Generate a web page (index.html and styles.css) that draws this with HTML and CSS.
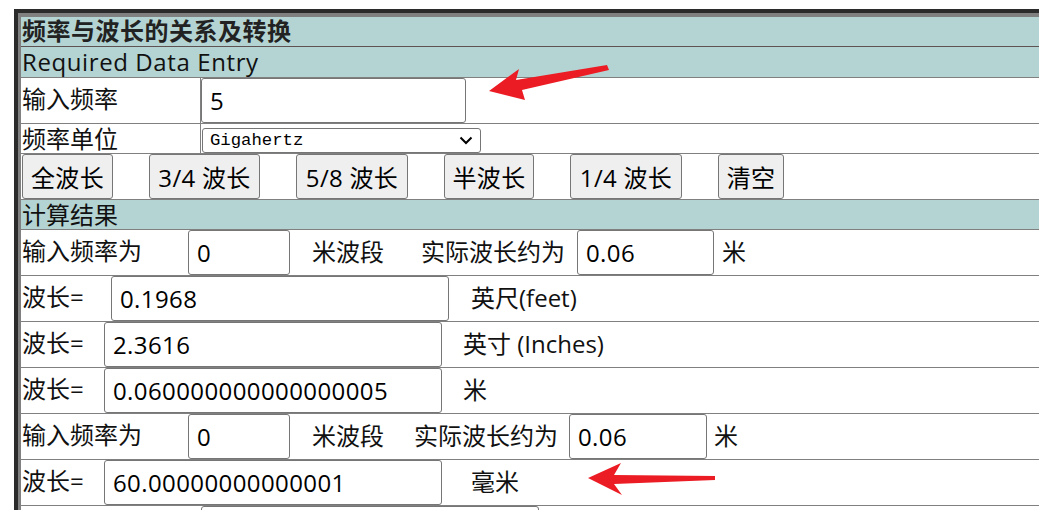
FILE: index.html
```html
<!DOCTYPE html>
<html lang="zh-CN">
<head>
<meta charset="utf-8">
<title>频率与波长的关系及转换</title>
<link rel="stylesheet" href="styles.css">
</head>
<body>
<div class="page">
  <div class="frame">
    <div class="inner">
      <div class="hdr title">频率与波长的关系及转换</div>
      <div class="hdr sub">Required Data Entry</div>

      <div class="row">
        <div class="lbl lbl-a">输入频率</div>
        <input class="inp w-freq" type="text" value="5">
      </div>

      <div class="row short bottom">
        <div class="lbl lbl-a">频率单位</div>
        <div class="select">
          <span>Gigahertz</span>
          <svg class="chev" width="14" height="9" viewBox="0 0 14 9"><polyline points="1.5,1.5 7,7 12.5,1.5" fill="none" stroke="#000" stroke-width="2"/></svg>
        </div>
      </div>

      <div class="row btns">
        <button class="btn bw91">全波长</button>
        <button class="btn bw111">3/4 波长</button>
        <button class="btn bw112">5/8 波长</button>
        <button class="btn bw90">半波长</button>
        <button class="btn bw112">1/4 波长</button>
        <button class="btn bw66">清空</button>
      </div>

      <div class="hdr sec">计算结果</div>

      <div class="row">
        <div class="lbl lbl-b">输入频率为</div>
        <input class="inp w-small" type="text" value="0">
        <span class="txt m22">米波段</span>
        <span class="txt m37">实际波长约为</span>
        <input class="inp w-approx m12" type="text" value="0.06">
        <span class="txt m8">米</span>
      </div>

      <div class="row">
        <div class="lbl lbl-c">波长=</div>
        <input class="inp w-long" type="text" value="0.1968">
        <span class="txt m22">英尺(feet)</span>
      </div>

      <div class="row">
        <div class="lbl lbl-d">波长=</div>
        <input class="inp w-long" type="text" value="2.3616">
        <span class="txt m21">英寸 (Inches)</span>
      </div>

      <div class="row">
        <div class="lbl lbl-d">波长=</div>
        <input class="inp w-long" type="text" value="0.060000000000000005">
        <span class="txt m21">米</span>
      </div>

      <div class="row">
        <div class="lbl lbl-b">输入频率为</div>
        <input class="inp w-small" type="text" value="0">
        <span class="txt m22">米波段</span>
        <span class="txt m30">实际波长约为</span>
        <input class="inp w-approx2 m11" type="text" value="0.06">
        <span class="txt m7">米</span>
      </div>

      <div class="row">
        <div class="lbl lbl-d">波长=</div>
        <input class="inp w-long" type="text" value="60.00000000000001">
        <span class="txt m29">毫米</span>
      </div>

      <div class="row">
        <div class="lbl lbl-e"></div>
        <input class="inp w-long" type="text" value="">
      </div>
    </div>
  </div>
</div>

<svg class="arrows" width="1039" height="510" viewBox="0 0 1039 510">
  <path d="M489 91 L519 69 L516 80 L607 65 L609 70 L522 90 L525 100 Z" fill="#ec1c24"/>
  <path d="M588 478 L621 463 L614 475 L715 476 L715 480 L614 484 L622 495 Z" fill="#ec1c24"/>
</svg>
</body>
</html>
```

FILE: styles.css
```css
html, body {
  margin: 0;
  padding: 0;
  overflow: hidden;
  background: #fff;
}

body {
  width: 1039px;
  height: 510px;
  position: relative;
  font-family: "Open Sans", "Noto Sans CJK SC", sans-serif;
  font-size: 24px;
  color: #111;
}

.page {
  box-sizing: border-box;
  height: 510px;
  overflow: hidden;
  padding: 9px 0 0 14px;
}

.frame {
  width: 1025px;
  border-top: 4px solid #2b2b2b;
  border-left: 4px solid #2b2b2b;
}

.inner {
  border-top: 4px solid #808080;
  border-left: 3px solid #808080;
}

.hdr {
  background: #b4d4d3;
  height: 29px;
  line-height: 29px;
  padding-left: 1px;
  border-bottom: 1px solid #808080;
  white-space: nowrap;
}

.title {
  font-weight: 700;
  color: #222;
  letter-spacing: 0.5px;
  line-height: 28px;
  border-bottom-color: #5e5252;
}

.sub {
  height: 30px;
  line-height: 30px;
  letter-spacing: 0.6px;
}

.row {
  display: flex;
  align-items: center;
  height: 45px;
  border-bottom: 1px solid #808080;
  white-space: nowrap;
}

.row.short {
  height: 29px;
}

.row.bottom {
  align-items: flex-end;
}

.lbl {
  box-sizing: border-box;
  flex: none;
  padding-left: 1px;
  padding-bottom: 5px;
  line-height: 29px;
}

.lbl-a {
  width: 180px;
  align-self: stretch;
  display: flex;
  align-items: center;
  border-right: 1px solid #808080;
}

.row.bottom .lbl-a {
  align-items: flex-end;
  padding-bottom: 0;
  line-height: 28px;
}

.lbl-b { width: 167px; }
.lbl-c { width: 90px; }
.lbl-d { width: 83px; }
.lbl-e { width: 180px; }

.inp {
  box-sizing: border-box;
  flex: none;
  height: 45px;
  margin: 0;
  padding: 0 8px;
  border: 1px solid #767676;
  border-radius: 3px;
  background: #fff;
  font: inherit;
  letter-spacing: 0.4px;
  color: #000;
  outline: none;
}

.w-freq { width: 265px; }
.w-small { width: 102px; }
.w-approx { width: 137px; }
.w-approx2 { width: 138px; }
.w-long { width: 338px; }

.txt {
  flex: none;
  padding-bottom: 5px;
}
.m7 { margin-left: 7px; }
.m8 { margin-left: 8px; }
.m11 { margin-left: 11px; }
.m12 { margin-left: 12px; }
.m21 { margin-left: 21px; }
.m22 { margin-left: 22px; }
.m29 { margin-left: 29px; }
.m30 { margin-left: 30px; }
.m37 { margin-left: 37px; }

.select {
  box-sizing: border-box;
  flex: none;
  width: 279px;
  height: 25px;
  margin-left: 1px;
  padding: 0 7px 0 7px;
  border: 1px solid #767676;
  border-radius: 3px;
  background: #fff;
  display: flex;
  align-items: center;
  justify-content: space-between;
  font-family: "Liberation Mono", monospace;
  font-size: 17.3px;
  color: #000;
}

.chev {
  display: block;
}

.btns {
  gap: 36px;
  padding-left: 1px;
}

.btn {
  box-sizing: border-box;
  flex: none;
  height: 45px;
  margin: 0;
  padding: 0;
  border: 1px solid #767676;
  border-radius: 3px;
  background: #efefef;
  font: inherit;
  letter-spacing: 0.3px;
  color: #000;
  text-align: center;
}

.bw66 { width: 66px; }
.bw90 { width: 90px; }
.bw91 { width: 91px; }
.bw111 { width: 111px; }
.bw112 { width: 112px; }

.arrows {
  position: absolute;
  left: 0;
  top: 0;
  pointer-events: none;
}
```
